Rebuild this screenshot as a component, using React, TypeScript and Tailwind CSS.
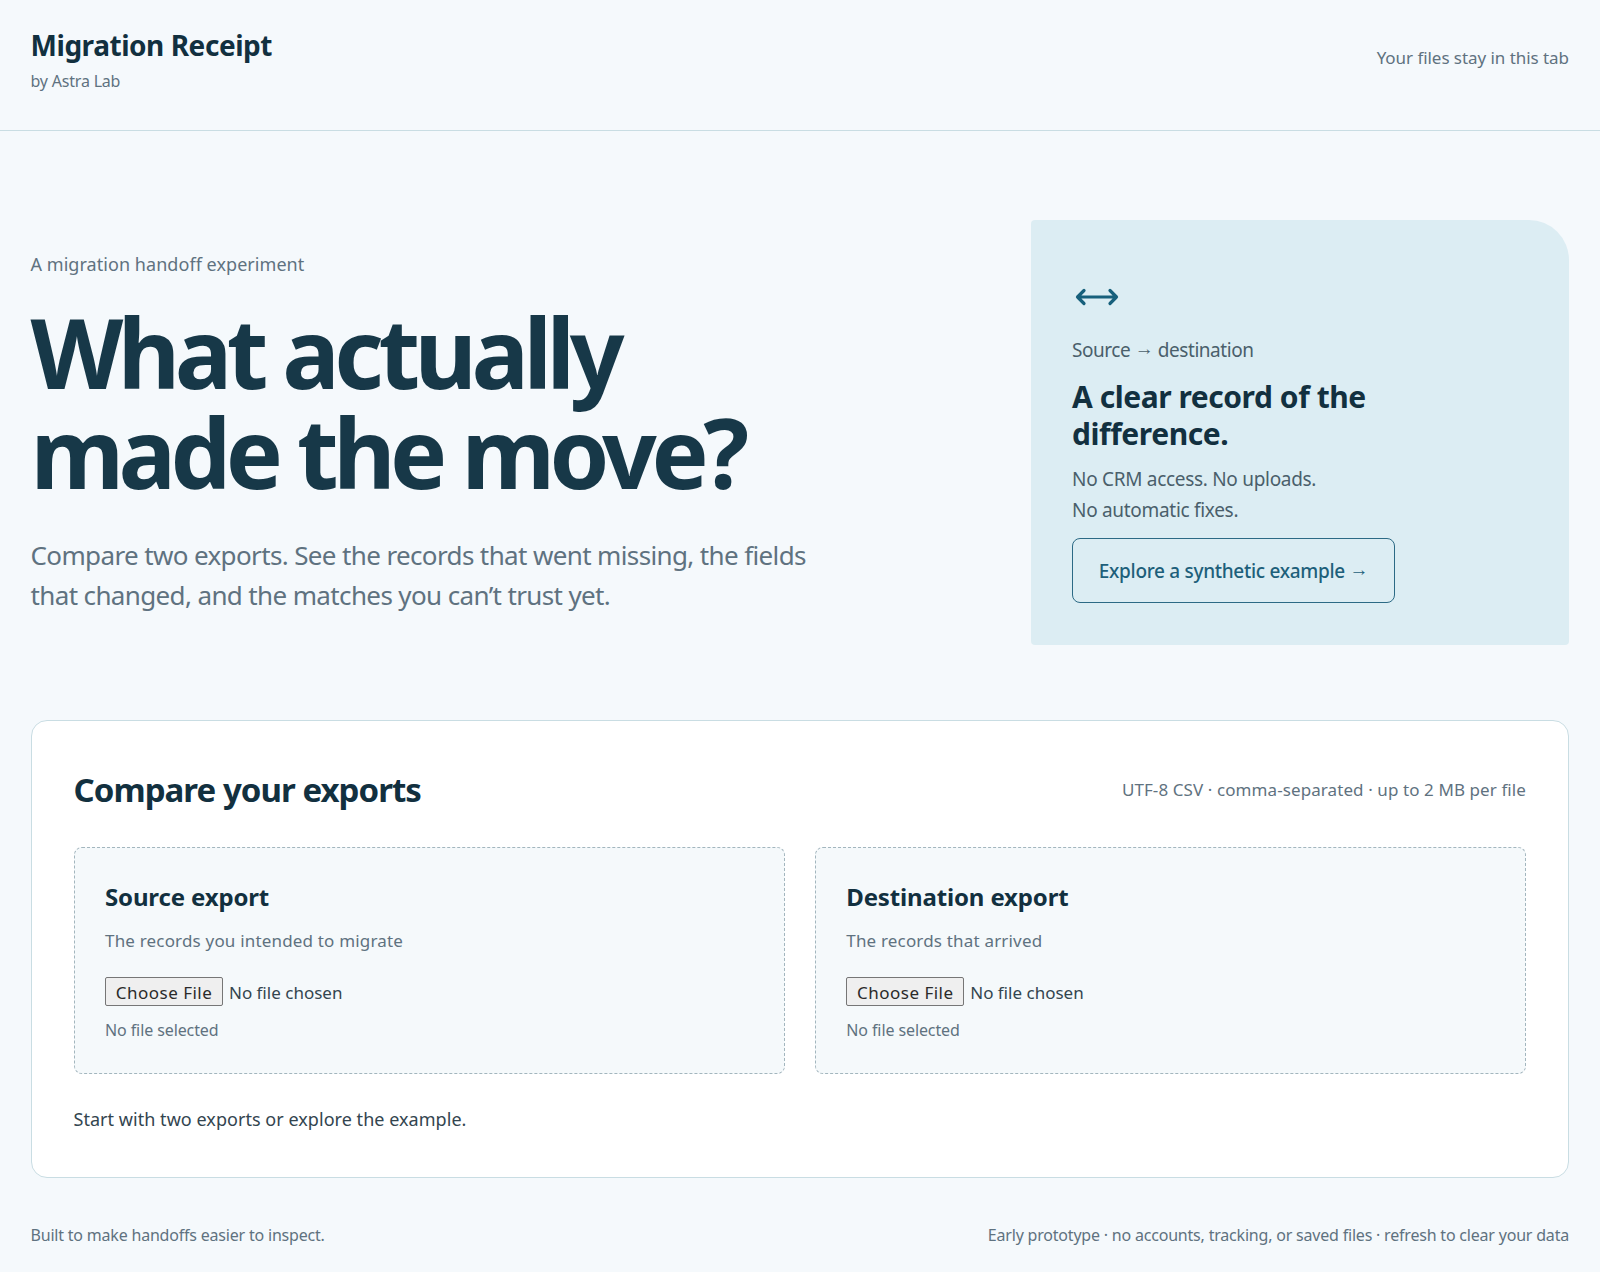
const font = "font-['Noto_Sans',sans-serif]";

function Arrow() {
  return <span className="align-[2px] font-['Liberation_Sans',sans-serif]">→</span>;
}

function DropZone({ title, hint }: { title: string; hint: string }) {
  return (
    <div className="rounded-lg border border-dashed border-[#a3b6be] bg-[#f5f9fb] px-[30.5px] pt-[33px] pb-[32px]">
      <h3 className="text-[24px] leading-[32px] font-bold tracking-[-0.15px] text-[#12303f]">{title}</h3>
      <p className="mt-[16px] text-[17px] leading-[24px] tracking-[0.18px] text-[#5f7280]">{hint}</p>
      <input
        type="file"
        className="mt-[24px] block text-[17px] leading-[29px] tracking-[0px] text-[#33454f] file:mr-[6px] file:h-[29px] file:w-[118px] file:rounded-[2px] file:border file:border-[#767676] file:bg-[#efefef] file:tracking-[0.5px] file:text-[#2a2a2a]"
      />
      <p className="mt-[12px] text-[16px] leading-[22px] tracking-[-0.1px] text-[#5f7280]">No file selected</p>
    </div>
  );
}

export default function App() {
  return (
    <div className={`${font} min-h-[1272px] bg-[#f5f9fc] text-[#12303f]`}>
      <header className="flex h-[131px] items-center justify-between border-b border-[#c9dde3] pl-[30.5px] pr-[31px]">
        <div className="-mt-[11px]">
          <div className="text-[28px] leading-[36px] font-bold tracking-[-0.45px]">Migration Receipt</div>
          <div className="mt-[7px] text-[16px] leading-[22px] tracking-[-0.2px] text-[#5f7280]">by Astra Lab</div>
        </div>
        <div className="mb-[14px] text-[17px] tracking-[-0.05px] text-[#5f7280]">Your files stay in this tab</div>
      </header>

      <main className="pl-[30.5px] pr-[31px]">
        <section className="flex items-start justify-between pt-[89px]">
          <div className="w-[800px] pt-[31px]">
            <p className="text-[18px] leading-[26px] tracking-[0.05px] text-[#5f7280]">A migration handoff experiment</p>
            <h1 className="mt-[25px] text-[96px] leading-[100px] font-bold tracking-[-5.5px] text-[#173848]">
              What actually
              <br />
              made the move?
            </h1>
            <p className="mt-[33px] text-[26px] leading-[40px] tracking-[-0.63px] text-[#5f7280]">
              Compare two exports. See the records that went missing, the fields that changed, and the matches you can’t trust yet.
            </p>
          </div>
          <aside className="h-[425px] w-[538px] rounded-[4px] rounded-tr-[40px] bg-[#dcedf3] pl-[41px] pt-[65px]">
            <svg className="ml-[3px]" width="44" height="24" viewBox="0 0 44 24" fill="none" stroke="#17607c" strokeWidth="3.2" strokeLinecap="round" strokeLinejoin="round">
              <path d="M2.5 12h39M9 5.5l-6.5 6.5 6.5 6.5M35 5.5l6.5 6.5-6.5 6.5" />
            </svg>
            <p className="mt-[26px] text-[19px] leading-[28px] tracking-[-0.45px] text-[#4a5f6b]">Source <Arrow /> destination</p>
            <h2 className="mt-[14px] w-[340px] text-[30px] leading-[37px] font-bold tracking-[-0.45px]">A clear record of the difference.</h2>
            <p className="mt-[12px] text-[19px] leading-[30.5px] tracking-[-0.3px] text-[#4a5f6b]">
              No CRM access. No uploads.
              <br />
              No automatic fixes.
            </p>
            <button className="mt-[13px] h-[65px] w-[323px] rounded-lg border border-[#2c6a85] text-[19px] font-medium tracking-[-0.3px] text-[#1d5f7a]">
              Explore a synthetic example <Arrow />
            </button>
          </aside>
        </section>

        <section className="mt-[75px] h-[458px] rounded-2xl border border-[#c9dde3] bg-white px-[42px] pt-[44px]">
          <div className="flex items-center justify-between">
            <h2 className="text-[33px] leading-[50px] font-bold tracking-[-0.95px]">Compare your exports</h2>
            <span className="text-[17px] tracking-[0.09px] text-[#5f7280]">UTF-8 CSV · comma-separated · up to 2 MB per file</span>
          </div>
          <div className="mt-[32px] grid grid-cols-2 gap-[30px]">
            <DropZone title="Source export" hint="The records you intended to migrate" />
            <DropZone title="Destination export" hint="The records that arrived" />
          </div>
          <p className="mt-[32px] text-[18px] leading-[26px] tracking-[0.04px] text-[#33454f]">Start with two exports or explore the example.</p>
        </section>

        <footer className="mt-[45px] flex justify-between text-[16px] leading-[24px] tracking-[-0.2px] text-[#5f7280]">
          <span>Built to make handoffs easier to inspect.</span>
          <span>Early prototype · no accounts, tracking, or saved files · refresh to clear your data</span>
        </footer>
      </main>
    </div>
  );
}
